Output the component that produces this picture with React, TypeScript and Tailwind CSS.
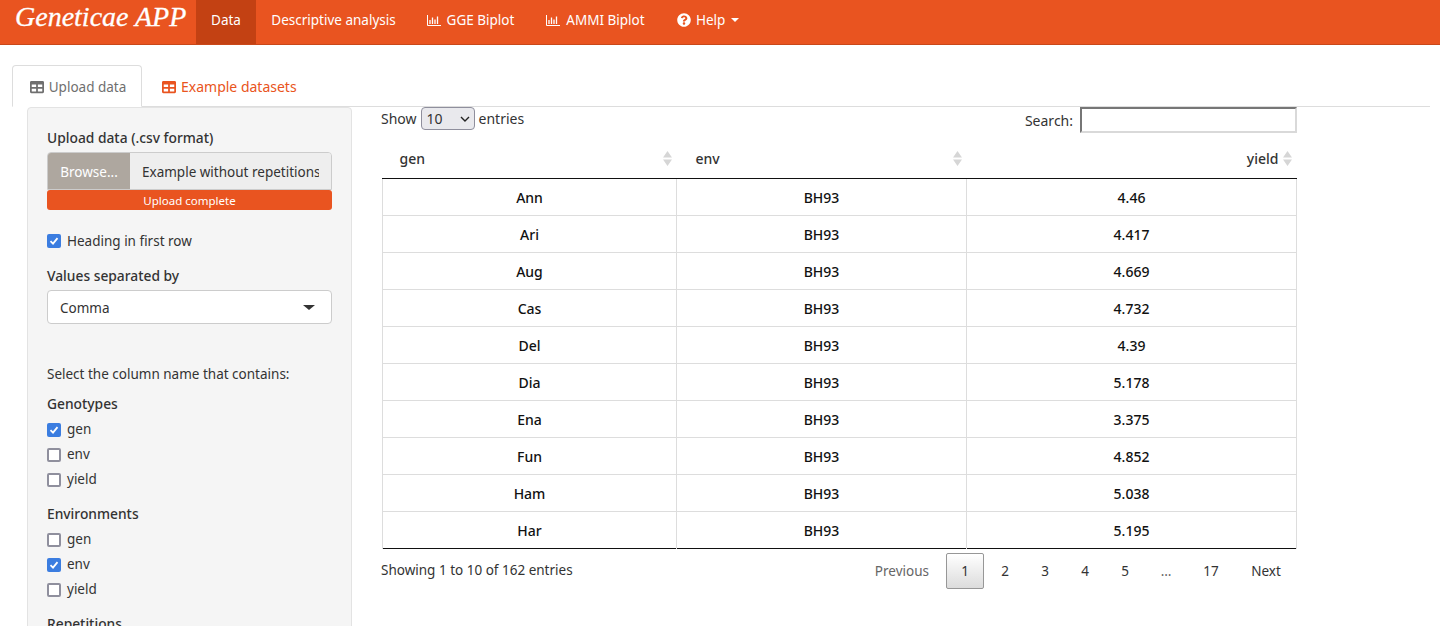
import { FaQuestionCircle, FaTable } from "react-icons/fa";

const rows = [
  ["Ann", "BH93", "4.46"],
  ["Ari", "BH93", "4.417"],
  ["Aug", "BH93", "4.669"],
  ["Cas", "BH93", "4.732"],
  ["Del", "BH93", "4.39"],
  ["Dia", "BH93", "5.178"],
  ["Ena", "BH93", "3.375"],
  ["Fun", "BH93", "4.852"],
  ["Ham", "BH93", "5.038"],
  ["Har", "BH93", "5.195"],
];

function ChartIcon() {
  return (
    <svg width="14" height="11" viewBox="0 0 14 11" fill="none" stroke="currentColor" className="shrink-0">
      <path d="M.5 0v10.5H14" />
      <path d="M3 5v4M5.5 2.5V9M8 4.5V9M10.5 1.5V9" strokeWidth="1.3" />
    </svg>
  );
}

function NavItem({ children, className }: { children: React.ReactNode; className: string }) {
  return <a className={`flex h-[44px] items-center pb-[4px] text-white ${className}`}>{children}</a>;
}

function Check({ label, checked, list }: { label: string; checked?: boolean; list?: boolean }) {
  return (
    <div className="flex h-[25px] items-center gap-[6px]">
      {checked ? (
        <span className="flex size-[14px] items-center justify-center rounded-[2px] bg-[#3b7de0]">
          <svg width="10" height="10" viewBox="0 0 10 10" fill="none" stroke="white" strokeWidth="1.8">
            <path d="M1.5 5.2 4 7.6 8.5 2.2" />
          </svg>
        </span>
      ) : (
        <span className="size-[14px] rounded-[2px] border-2 border-[#8f8f9d] bg-white" />
      )}
      <span className={list ? "pb-[2px]" : ""}>{label}</span>
    </div>
  );
}

function SortArrows() {
  return (
    <svg width="9" height="15" viewBox="0 0 9 15" fill="#d6d6d6" className="shrink-0">
      <path d="M4.5 0 9 6.5H0zM0 8.5h9L4.5 15z" />
    </svg>
  );
}

function PageBtn({ children, active, muted, className }: { children: React.ReactNode; active?: boolean; muted?: boolean; className: string }) {
  return (
    <span
      className={`ml-[2px] flex h-[36px] items-center justify-center rounded-[2px] ${className} ${
        active
          ? "border border-[#979797] bg-gradient-to-b from-white to-[#dcdcdc]"
          : muted
            ? "text-[#666666]"
            : ""
      }`}
    >
      {children}
    </span>
  );
}

export default function App() {
  return (
    <div className="h-[626px] overflow-hidden bg-white font-['Noto_Sans',sans-serif] text-[13.5px] leading-[20px] text-[#333333]">
      {/* Navbar */}
      <nav className="flex h-[45px] border-b border-[#c9481a] bg-[#e95420]">
        <div className="w-[196px] pl-[15px] font-['Liberation_Serif',serif] text-[28px] leading-[34px] whitespace-nowrap text-white italic [-webkit-text-stroke:0.3px_white]">
          Geneticae APP
        </div>
        <NavItem className="w-[60px] justify-center bg-[#c34113]">Data</NavItem>
        <NavItem className="w-[155px] justify-center">Descriptive analysis</NavItem>
        <NavItem className="w-[119px] justify-center gap-[6px]">
          <ChartIcon />
          GGE Biplot
        </NavItem>
        <NavItem className="w-[131px] justify-center gap-[6px]">
          <ChartIcon />
          AMMI Biplot
        </NavItem>
        <NavItem className="gap-[5px] pl-[16px]">
          <FaQuestionCircle className="size-[14px]" />
          Help
          <span className="ml-[1px] border-x-[4px] border-t-[4px] border-x-transparent border-t-white" />
        </NavItem>
      </nav>

      <div className="mr-[10px] ml-[12px] pt-[20px]">
        {/* Tabs */}
        <div className="flex h-[42px] border-b border-[#dddddd]">
          <div className="flex h-[42px] w-[130px] items-center justify-center gap-[5px] rounded-t-[4px] border border-[#dddddd] border-b-white bg-white pt-[2px] pl-[2px] text-[#6f6f6f]">
            <FaTable className="size-[14px]" />
            Upload data
          </div>
          <div className="flex h-[41px] items-center gap-[5px] pt-[2px] pl-[20px] text-[14px] text-[#e95420]">
            <FaTable className="size-[14px]" />
            Example datasets
          </div>
        </div>

        <div className="flex items-start pl-[15px]">
          {/* Sidebar */}
          <aside className="h-[560px] w-[325px] shrink-0 rounded-[4px] border border-[#e3e3e3] bg-[#f5f5f5] px-[19px] pt-[20px]">
            <div className="text-[13.8px] font-medium">Upload data (.csv format)</div>
            <div className="mt-[4px] flex h-[38px] overflow-hidden rounded-t-[4px] border border-[#cccccc]">
              <span className="flex w-[82px] shrink-0 items-center justify-center bg-[#aea79f] pt-[1px] text-white">Browse...</span>
              <span className="min-w-0 flex-1 bg-[#eeeeee] px-[12px] pt-[1px] leading-[36px]">
                <span className="block overflow-hidden whitespace-nowrap">Example without repetitions.csv</span>
              </span>
            </div>
            <div className="flex h-[20px] items-center justify-center rounded-[3px] bg-[#e95420] pt-[1px] text-[11.5px] text-white">
              Upload complete
            </div>

            <div className="mt-[18px]">
              <Check label="Heading in first row" checked />
            </div>

            <div className="mt-[13px] text-[13.8px] font-medium">Values separated by</div>
            <div className="mt-[4px] flex h-[34px] items-center justify-between rounded-[4px] border border-[#cccccc] bg-white pt-[1px] pr-[16px] pl-[12px]">
              Comma
              <span className="border-x-[6px] border-t-[5px] border-x-transparent border-t-[#333333]" />
            </div>

            <div className="mt-[40px]">Select the column name that contains:</div>
            <div className="mt-[10px] text-[13.8px] font-medium">Genotypes</div>
            <div className="mt-[3px]">
              <Check list label="gen" checked />
              <Check list label="env" />
              <Check list label="yield" />
            </div>
            <div className="mt-[12px] text-[13.8px] font-medium">Environments</div>
            <div className="mt-[3px]">
              <Check list label="gen" />
              <Check list label="env" checked />
              <Check list label="yield" />
            </div>
            <div className="mt-[12px] text-[13.8px] font-medium">Repetitions</div>
          </aside>

          {/* Table */}
          <section className="ml-[29px] w-[916px]">
            <div className="flex h-[39px] items-start justify-between text-[14px]">
              <div className="flex items-center gap-[4px]">
                Show
                <span className="flex h-[23px] w-[54px] items-center justify-between rounded-[4px] border border-[#8f8f9d] bg-[#e9e9ed] pr-[4px] pl-[5px]">
                  10
                  <svg width="10" height="6" viewBox="0 0 10 6" fill="none" stroke="#222222" strokeWidth="1.4">
                    <path d="M1 1l4 4 4-4" />
                  </svg>
                </span>
                entries
              </div>
              <div className="flex items-center gap-[7px]">
                <span className="pt-[2px]">Search:</span>
                <span className="h-[26px] w-[217px] border-2 border-t-[#767676] border-r-[#d9d9d9] border-b-[#d9d9d9] border-l-[#767676] bg-white" />
              </div>
            </div>

            <table className="ml-[1px] w-[914px] table-fixed border-collapse text-[14px]">
              <colgroup>
                <col className="w-[294px]" />
                <col className="w-[290px]" />
                <col className="w-[330px]" />
              </colgroup>
              <thead>
                <tr className="h-[32px]">
                  <th className="border-b border-[#111111] pt-[2px] pb-[8px] pl-[17px] text-left font-medium">
                    <div className="flex items-center justify-between pr-[5px]">
                      gen
                      <SortArrows />
                    </div>
                  </th>
                  <th className="border-b border-[#111111] pt-[2px] pb-[8px] pl-[19px] text-left font-medium">
                    <div className="flex items-center justify-between pr-[5px]">
                      env
                      <SortArrows />
                    </div>
                  </th>
                  <th className="border-b border-[#111111] pt-[2px] pb-[8px] text-right font-medium">
                    <div className="flex items-center justify-end gap-[4px] pr-[5px]">
                      yield
                      <SortArrows />
                    </div>
                  </th>
                </tr>
              </thead>
              <tbody className="text-center font-medium text-[#111111]">
                {rows.map((row, i) => (
                  <tr key={row[0]} className={`h-[37px] ${i === rows.length - 1 ? "border-b border-[#111111]" : "border-b border-[#dddddd]"}`}>
                    {row.map((cell, j) => (
                      <td key={j} className="border-x border-[#dddddd] p-0 pt-[2px]">
                        {cell}
                      </td>
                    ))}
                  </tr>
                ))}
              </tbody>
            </table>

            <div className="flex items-start justify-between pt-[4px]">
              <div className="pt-[7px]">Showing 1 to 10 of 162 entries</div>
              <div className="mr-[1px] flex items-center">
                <PageBtn muted className="px-[15px]">Previous</PageBtn>
                <PageBtn active className="w-[38px]">1</PageBtn>
                <PageBtn className="w-[38px]">2</PageBtn>
                <PageBtn className="w-[38px]">3</PageBtn>
                <PageBtn className="w-[38px]">4</PageBtn>
                <PageBtn className="w-[38px]">5</PageBtn>
                <PageBtn muted className="w-[40px]">…</PageBtn>
                <PageBtn className="w-[46px]">17</PageBtn>
                <PageBtn className="w-[60px]">Next</PageBtn>
              </div>
            </div>
          </section>
        </div>
      </div>
    </div>
  );
}
